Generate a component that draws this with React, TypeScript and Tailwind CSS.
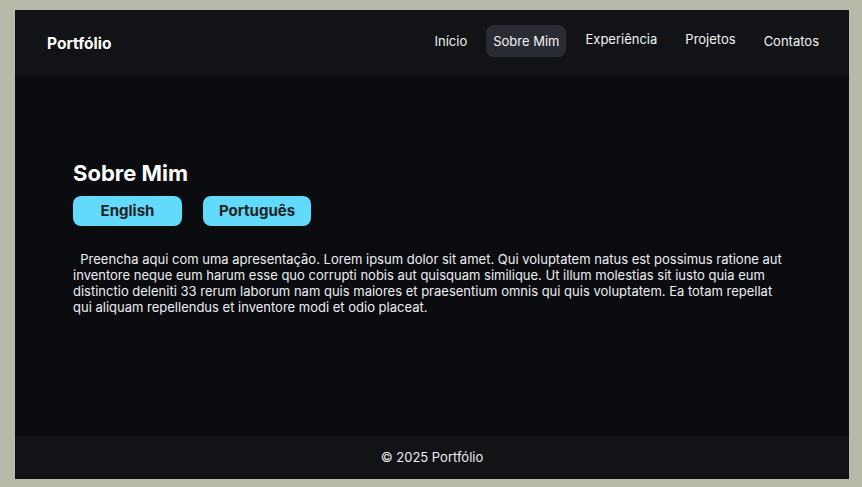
import React from "react";

export default function App() {
  const font = { fontFamily: "Inter, 'Noto Sans', sans-serif" };
  return (
    <div
      className="h-[487px] w-[862px] bg-[#b9b9a9] pt-[10px] pl-[15px] pr-[13px] pb-[8px]"
      style={font}
    >
      <div className="flex h-full flex-col bg-[#0b0c10]">
        <header className="flex h-[65px] shrink-0 items-center justify-between bg-[#121317] pl-[32px] pr-[23px]">
          <div className="mt-[3px] text-[15.5px] font-bold text-white">Portfólio</div>
          <nav className="-mt-[3px] flex items-center gap-[12px] text-[13px] leading-[18px] text-[#f1f2f4]">
            <a className="px-[7px] py-[7px]">Início</a>
            <a className="rounded-lg bg-[#2a2c33] px-[7px] py-[7px]">Sobre Mim</a>
            <a className="px-[7px] py-[7px] -translate-y-[2px]">Experiência</a>
            <a className="ml-[2px] px-[7px] py-[7px] -translate-y-[2px]">Projetos</a>
            <a className="ml-[2px] px-[7px] py-[7px]">Contatos</a>
          </nav>
        </header>
        <main className="flex-1 px-[58px] pt-[84px]">
          <h1 className="text-[22px] font-bold leading-[28px] text-white">Sobre Mim</h1>
          <div className="mt-[9px] flex gap-[21px]">
            <button className="h-[30px] w-[109px] rounded-lg bg-[#61dafb] text-[15px] font-bold text-[#222]">
              English
            </button>
            <button className="h-[30px] w-[108px] rounded-lg bg-[#61dafb] text-[15px] font-bold text-[#222]">
              Português
            </button>
          </div>
          <p className="mt-[25px] pr-[2px] text-[13px] leading-[16px] text-[#eceef1]">
            &nbsp; Preencha aqui com uma apresentação. Lorem ipsum dolor sit amet. Qui voluptatem natus est possimus ratione aut inventore neque eum harum esse quo corrupti nobis aut quisquam similique. Ut illum molestias sit iusto quia eum distinctio deleniti 33 rerum laborum nam quis maiores et praesentium omnis qui quis voluptatem. Ea totam repellat qui aliquam repellendus et inventore modi et odio placeat.
          </p>
        </main>
        <footer className="flex h-[43px] shrink-0 items-center justify-center bg-[#121317] text-[13px] text-[#eceef1]">
          © 2025 Portfólio
        </footer>
      </div>
    </div>
  );
}
